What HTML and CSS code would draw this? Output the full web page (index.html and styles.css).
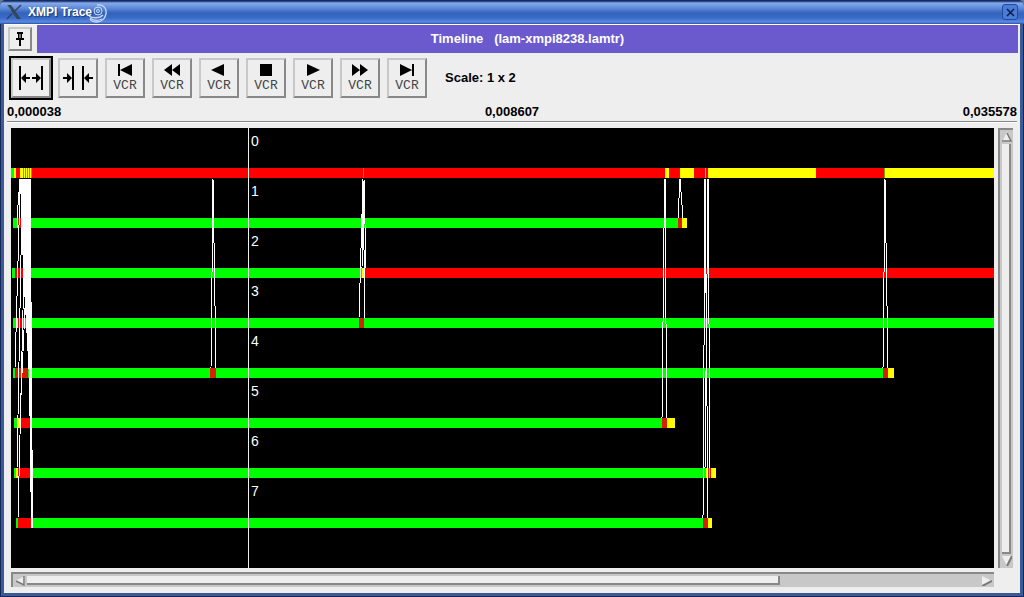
FILE: index.html
```html
<!DOCTYPE html>
<html lang="en">
<head>
<meta charset="utf-8">
<title>XMPI Trace</title>
<link rel="stylesheet" href="styles.css">
</head>
<body>
<main class="window">
  <header class="titlebar">
    <svg class="app-icon" width="16" height="16" viewBox="0 0 16 16" aria-hidden="true">
      <path d="M1 1h4l10 14h-4z" fill="#34465c"/>
      <path d="M15 1L9 7M6 9.500L1 15" stroke="#34465c" stroke-width="1.500"/>
      <path d="M1 1l4 5" stroke="#6b7f96"/>
    </svg>
    <h1 class="title">XMPI Trace</h1>
    <svg class="swirl" width="20" height="20" viewBox="0 0 20 20" fill="none" stroke="#c9d8f2" aria-hidden="true">
      <circle cx="10" cy="7" r="1.500"/>
      <circle cx="10" cy="7" r="4"/>
      <path stroke-width="1.300" d="M9 1c6-1 10 3 9 9-1 5-5 8-9 8-4 0-6-1-7-3"/>
      <path stroke-width="1.300" d="M1 12c3 2 10 3 14-1M2 14c4 3 8 3 12 1"/>
    </svg>
    <button class="close" type="button" aria-label="Close">
      <svg width="9" height="9" viewBox="0 0 9 9" aria-hidden="true"><path d="M1 1l7 7M8 1L1 8" stroke="#0b1c48" stroke-width="1.500"/></svg>
    </button>
  </header>
  <div class="content">
    <div class="banner-row">
      <button class="pin" type="button" aria-label="Pin">
        <svg width="10" height="14" viewBox="0 0 10 14" aria-hidden="true"><path d="M2 0h6v2H7v4h2v2H6v6H4V8H1V6h2V2H2z"/><path d="M5 2v4" stroke="#eee"/></svg>
      </button>
      <h2 class="banner">Timeline &nbsp; (lam-xmpi8238.lamtr)</h2>
    </div>
    <div class="toolbar">
      <span class="default-ring"><button class="tool" type="button" aria-label="Zoom out">
        <svg width="26" height="24" viewBox="0 0 26 24" aria-hidden="true"><path d="M1 0h2v24H1zM23 0h2v24h-2zM3 12l5-5v4h4v2H8v4zM23 12l-5-5v4h-4v2h4v4z"/></svg>
      </button></span>
      <button class="tool" type="button" aria-label="Zoom in">
        <svg width="30" height="24" viewBox="0 0 30 24" aria-hidden="true"><path d="M9 0h2v24H9zM19 0h2v24h-2zM9 12L4 7v4H0v2h4v4zM21 12l5-5v4h4v2h-4v4z"/></svg>
      </button>
      <button class="tool vcr" type="button" aria-label="VCR start">
        <svg width="18" height="12" viewBox="0 0 18 12" aria-hidden="true"><path d="M2 0h2v12H2zM16 0v12L4 6z"/></svg><span>VCR</span>
      </button>
      <button class="tool vcr" type="button" aria-label="VCR rewind">
        <svg width="18" height="12" viewBox="0 0 18 12" aria-hidden="true"><path d="M9 0v12L1 6zM17 0v12L9 6z"/></svg><span>VCR</span>
      </button>
      <button class="tool vcr" type="button" aria-label="VCR play backward">
        <svg width="18" height="12" viewBox="0 0 18 12" aria-hidden="true"><path d="M14 0v12L1 6z"/></svg><span>VCR</span>
      </button>
      <button class="tool vcr" type="button" aria-label="VCR stop">
        <svg width="18" height="12" viewBox="0 0 18 12" aria-hidden="true"><path d="M3 0h12v12H3z"/></svg><span>VCR</span>
      </button>
      <button class="tool vcr" type="button" aria-label="VCR play">
        <svg width="18" height="12" viewBox="0 0 18 12" aria-hidden="true"><path d="M3 0v12l13-6z"/></svg><span>VCR</span>
      </button>
      <button class="tool vcr" type="button" aria-label="VCR fast forward">
        <svg width="18" height="12" viewBox="0 0 18 12" aria-hidden="true"><path d="M1 0v12l8-6zM9 0v12l8-6z"/></svg><span>VCR</span>
      </button>
      <button class="tool vcr" type="button" aria-label="VCR end">
        <svg width="18" height="12" viewBox="0 0 18 12" aria-hidden="true"><path d="M2 0v12l12-6zM14 0h2v12h-2z"/></svg><span>VCR</span>
      </button>
      <span class="scale">Scale: 1 x 2</span>
    </div>
    <div class="times"><span>0,000038</span><span>0,008607</span><span>0,035578</span></div>
    <div class="viewer">
      <svg class="trace" role="img" aria-label="Process timeline">
        <g shape-rendering="crispEdges">
          <g fill="#00ff00">
            <path d="M0 40h3v10H0zM2 90h665v10H2zM1 140h350v10H1zM2 190h1200v10H2zM2 240h870v10H2zM3 290h648v10H3zM3 340h692v10H3zM5 390h687v10H5z"/>
          </g>
          <g fill="#ffff00">
            <path d="M3 40h18v10H3zM654 40h600v10H654zM6 90h1v10H6zM671 90h5v10h-5zM351 140h2v10h-2zM6 190h1v10H6zM877 240h6v10h-6zM7 290h3v10H7zM656 290h8v10h-8zM5 340h2v10H5zM695 340h10v10h-10zM21 390h1v10h-1zM697 390h4v10h-4z"/>
          </g>
          <g fill="#ff0000">
            <path d="M5 40h4v10H5zM21 40h633v10H21zM658 40h11v10h-11zM683 40h14v10h-14zM805 40h68v10h-68zM7 90h4v10H7zM4 140h8v10H4zM353 140h900v10H353zM7 190h5v10H7zM10 290h9v10h-9zM7 340h13v10H7zM7 390h14v10H7z"/>
          </g>
          <path fill="#d82000" d="M667 90h4v10h-4zM348 190h5v10h-5zM4 240h13v10H4zM199 240h6v10h-6zM872 240h5v10h-5zM651 290h5v10h-5zM696 340h4v10h-4zM692 390h5v10h-5z"/>
          <path fill="#80a000" d="M12 40h1v10h-1zM14 40h1v10h-1zM16 40h1v10h-1zM18 40h1v10h-1zM20 40h1v10h-1zM352 40h1v10h-1zM873 40h1v10h-1z"/>
          <path fill="#ffc000" d="M694 40h1v10h-1zM698 340h1v10h-1z"/>
          <path fill="#ffffff" d="M9 51h11v56l1 133 1 160h-2l-2-150-6-108z"/>
          <path fill="none" stroke="#ffffff" d="M9 51L6 90M9 62L4 240M11 75L6 340M13 140L7 390M14 180L9 290M17 190L18 240M202 51L200 240M202 51L205 240M352 51L348 190M352 51L354 190M353 51L355 140M352 51L351 140M653 51V100L651 290M654 51V100L656 290M669 51L667 90M669 51L672 90M694 51L692 390M694 51L697 390M697 51L694 340M697 51L699 340M874 51L872 240M874 51L877 240"/>
          <path fill="#f0f0f0" d="M237 0h1v440h-1z"/>
        </g>
        <g class="rank">
          <text x="240" y="18">0</text><text x="240" y="68">1</text><text x="240" y="118">2</text><text x="240" y="168">3</text>
          <text x="240" y="218">4</text><text x="240" y="268">5</text><text x="240" y="318">6</text><text x="240" y="368">7</text>
        </g>
      </svg>
      <div class="scrollbar vertical">
        <button type="button" aria-label="Scroll up"><svg width="10" height="10" viewBox="0 0 10 10" aria-hidden="true"><path d="M5 0l5 10H0z" fill="#eee"/><path d="M5 1l4 8H0" fill="none" stroke="#777" stroke-width="1.500"/></svg></button>
        <div class="thumb"></div>
        <button type="button" aria-label="Scroll down"><svg width="10" height="10" viewBox="0 0 10 10" aria-hidden="true"><path d="M5 10L0 0h10z" fill="#eee"/><path d="M5 10l5-10" stroke="#777" stroke-width="2"/></svg></button>
      </div>
      <div class="scrollbar horizontal">
        <button type="button" aria-label="Scroll left"><svg width="10" height="10" viewBox="0 0 10 10" aria-hidden="true"><path d="M0 5l10-5v10z" fill="#eee"/><path d="M1 5l8 4V0" fill="none" stroke="#777" stroke-width="1.500"/></svg></button>
        <div class="track"><div class="thumb"></div></div>
        <button type="button" aria-label="Scroll right"><svg width="10" height="10" viewBox="0 0 10 10" aria-hidden="true"><path d="M10 5L0 0v10z" fill="#eee"/><path d="M10 5L0 10" stroke="#777" stroke-width="2"/></svg></button>
      </div>
    </div>
  </div>
</main>
</body>
</html>
```
FILE: styles.css
```css
* { box-sizing: border-box; }

body {
  margin: 0;
  background: #64799c;
  color: #000;
  font: bold 13px/16px "Liberation Sans", Arial, sans-serif;
}

button {
  display: flex;
  align-items: center;
  justify-content: center;
  margin: 0;
  padding: 0;
  background: #eee;
  color: inherit;
  font: inherit;
}

svg { display: block; flex: none; }

.window {
  display: flex;
  flex-direction: column;
  min-height: 100vh;
  padding: 0 4px 4px;
  border-radius: 6px 6px 0 0;
  background: #3c5a94;
  box-shadow: inset 0 0 0 1px #14275a;
}

.titlebar {
  display: flex;
  align-items: center;
  height: 24px;
  margin: 0 -4px;
  padding: 0 6px;
  border-radius: 6px 6px 0 0;
  background: linear-gradient(#142c66 0, #142c66 1px, #86a9e8 3px, #5f8bdc 8px, #3463bb 13px, #396bc8 18px, #5b8ae2 22px, #2d519c 24px);
}

.title {
  margin: 0 -4px 0 6px;
  color: #fff;
  font-size: 12px;
  text-shadow: 1px 1px 1px #1b3670;
}

.swirl { margin-top: 3px; }

.close {
  width: 16px;
  height: 16px;
  margin-left: auto;
  border: 1px solid #234a9c;
  border-radius: 3px;
  background: #4a7bd6;
}

.content {
  display: flex;
  flex: 1;
  flex-direction: column;
  border-top: 1px solid #fff;
  background: #eee;
}

.banner-row {
  display: flex;
  align-items: center;
  gap: 5px;
  padding: 0 2px 0 4px;
}

.pin, .tool {
  border: 2px solid;
  border-color: #c8c8c8 #888 #888 #c8c8c8;
}

.pin { width: 24px; height: 24px; }

.banner {
  flex: 1;
  margin: 0;
  background: #6a5acd;
  color: #fff;
  font-size: 13px;
  line-height: 28px;
  text-align: center;
}

.toolbar {
  display: flex;
  align-items: center;
  gap: 7px;
  padding: 3px 5px 0;
}

.default-ring {
  margin-right: -2px;
  border: 2px solid #000;
}

.tool {
  flex: none;
  width: 40px;
  height: 40px;
}

.vcr { flex-direction: column; gap: 4px; }

.vcr span {
  color: #444;
  font: 13px/12px "Liberation Mono", monospace;
}

.scale { margin-left: 11px; }

.times {
  display: flex;
  justify-content: space-between;
  margin: 0 3px;
  padding: 4px 0 1px;
  border-bottom: 1px solid #888;
  box-shadow: 0 1px #fff;
}

.viewer {
  display: grid;
  flex: 1;
  grid-template-columns: 1fr 15px;
  grid-template-rows: 1fr 15px;
  gap: 4px;
  padding: 6px 7px 6px;
}

.trace {
  width: 100%;
  height: 100%;
  min-height: 440px;
  overflow: hidden;
  background: #000;
}

.rank {
  fill: #fff;
  font: 14px "Liberation Sans", Arial, sans-serif;
}

.scrollbar {
  display: flex;
  padding: 2px;
  border: solid;
  border-width: 2px 0 0 2px;
  border-color: #888;
  background: #c8c8c8;
}

.scrollbar button { border: 0; background: none; }

.vertical { flex-direction: column; gap: 2px; }
.vertical .thumb { flex: 1; }
.horizontal { gap: 2px; }
.track { flex: 1; }
.horizontal .thumb { width: 79%; height: 100%; }

.thumb {
  background: #eee;
  border: solid #888;
  border-width: 0 2px 2px 0;
}
```
